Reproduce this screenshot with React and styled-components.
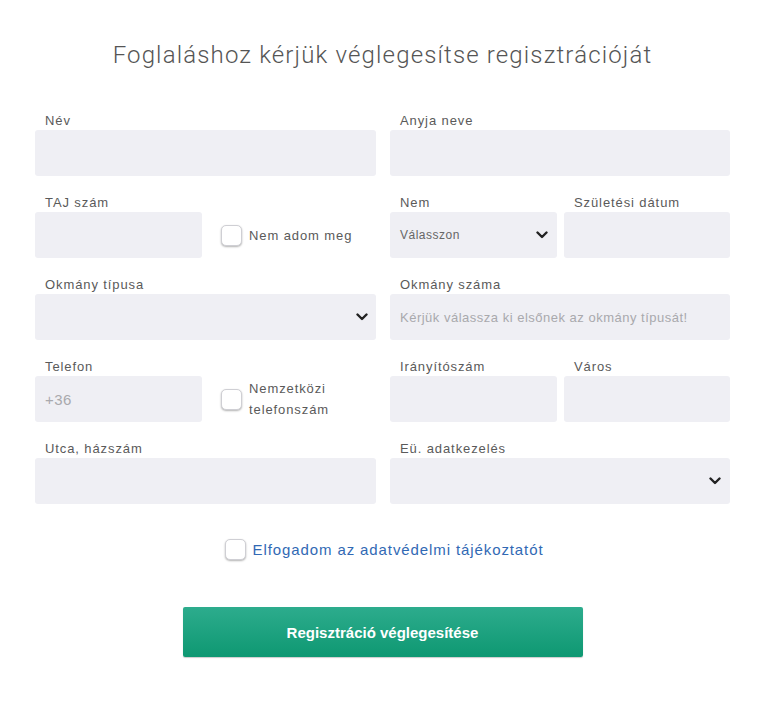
import React from 'react'
import styled, { createGlobalStyle } from 'styled-components'

const GlobalStyle = createGlobalStyle`
  body {
    margin: 0;
    background: #ffffff;
    font-family: "Liberation Sans", Arial, sans-serif;
  }
`

const Page = styled.div`
  width: 765px;
  padding: 40px 35px 60px;
  box-sizing: border-box;
`

const Title = styled.h1`
  margin: 0 0 41px;
  font-family: Roboto, "Liberation Sans", Arial, sans-serif;
  font-weight: 300;
  font-size: 24px;
  line-height: 30px;
  letter-spacing: 1.15px;
  color: #555555;
  text-align: center;
`

const Form = styled.div`
  display: grid;
  grid-template-columns: 341px 340px;
  column-gap: 14px;
  row-gap: 17px;
`

const Split = styled.div`
  display: grid;
  grid-template-columns: 167px 1fr;
  column-gap: 7px;
  align-items: end;
`

const Field = styled.div`
  display: flex;
  flex-direction: column;
`

const Label = styled.label`
  display: block;
  height: 19px;
  padding-left: 10px;
  font-size: 13px;
  line-height: 19px;
  letter-spacing: 0.9px;
  color: #5a5a5a;
  white-space: nowrap;
`

const Box = styled.div`
  position: relative;
  height: 46px;
  box-sizing: border-box;
  padding: 0 10px;
  display: flex;
  align-items: center;
  background: #efeff4;
  border-radius: 3px;
  font-size: ${({ $size }) => $size || 13}px;
  letter-spacing: 0.5px;
  color: ${({ $muted }) => ($muted ? '#a9a9ad' : '#666666')};
`

const Chevron = styled.svg`
  position: absolute;
  right: ${({ $right }) => $right}px;
  top: 50%;
  margin-top: -4px;
`

const CheckRow = styled.label`
  display: flex;
  align-items: center;
  height: 46px;
  padding-left: ${({ $indent }) => $indent}px;
  gap: 7px;
  font-size: ${({ $size }) => $size || 13}px;
  line-height: 21px;
  letter-spacing: 0.9px;
  color: ${({ $link }) => ($link ? '#3169b4' : '#5a5a5a')};
  white-space: nowrap;
`

const Check = styled.span`
  flex: none;
  width: 19px;
  height: 19px;
  background: #ffffff;
  border: 1px solid #cfcfd4;
  border-radius: 5px;
  box-shadow: 0 1px 2px rgba(0, 0, 0, 0.3);
`

const Consent = styled.div`
  display: flex;
  justify-content: center;
  margin: 33px 0 46px;
  padding-left: 3px;

  & > label {
    height: 24px;
  }
`

const ButtonRow = styled.div`
  display: flex;
  justify-content: center;
`

const Submit = styled.button`
  width: 400px;
  height: 50px;
  border: none;
  border-radius: 2px;
  background: linear-gradient(#2dac8d, #0e9872);
  box-shadow: 0 1px 1px rgba(0, 0, 0, 0.2);
  color: #ffffff;
  font-family: "Liberation Sans", Arial, sans-serif;
  font-weight: bold;
  font-size: 15px;
  letter-spacing: 0;
  cursor: pointer;
`

const Arrow = ({ right }) => (
  <Chevron $right={right} width="12" height="8" viewBox="0 0 12 8">
    <path d="M1.5 1.5 L6 6 L10.5 1.5" fill="none" stroke="#222" strokeWidth="2.4" strokeLinecap="round" strokeLinejoin="round" />
  </Chevron>
)

const Input = ({ label, children, ...rest }) => (
  <Field>
    <Label>{label}</Label>
    <Box {...rest}>{children}</Box>
  </Field>
)

export default function App() {
  return (
    <Page>
      <GlobalStyle />
      <Title>Foglaláshoz kérjük véglegesítse regisztrációját</Title>
      <Form>
        <Input label="Név" />
        <Input label="Anyja neve" />

        <Split>
          <Input label="TAJ szám" />
          <CheckRow $indent={12}><Check />Nem adom meg</CheckRow>
        </Split>
        <Split>
          <Input label="Nem" $size={12}>
            Válasszon
            <Arrow right={9} />
          </Input>
          <Input label="Születési dátum" />
        </Split>

        <Input label="Okmány típusa">
          <Arrow right={8} />
        </Input>
        <Input label="Okmány száma" $muted>
          Kérjük válassza ki elsőnek az okmány típusát!
        </Input>

        <Split>
          <Input label="Telefon" $muted $size={15}>+36</Input>
          <CheckRow $indent={12}>
            <Check />
            <span>Nemzetközi<br />telefonszám</span>
          </CheckRow>
        </Split>
        <Split>
          <Input label="Irányítószám" />
          <Input label="Város" />
        </Split>

        <Input label="Utca, házszám" />
        <Input label="Eü. adatkezelés">
          <Arrow right={9} />
        </Input>
      </Form>

      <Consent>
        <CheckRow $indent={0} $size={15} $link><Check />Elfogadom az adatvédelmi tájékoztatót</CheckRow>
      </Consent>

      <ButtonRow>
        <Submit>Regisztráció véglegesítése</Submit>
      </ButtonRow>
    </Page>
  )
}
